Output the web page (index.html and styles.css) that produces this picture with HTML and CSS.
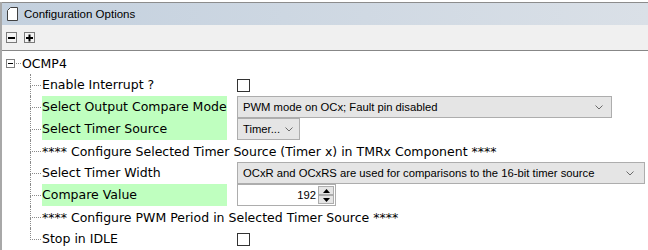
FILE: index.html
```html
<!DOCTYPE html>
<html lang="en">

<head>
    <meta charset="UTF-8">
    <title>Configuration Options</title>
    <link rel="stylesheet" href="styles.css">
</head>

<body>
    <div class="panel">
        <div class="title-bar">
            <svg class="page-icon" width="11" height="14" viewBox="0 0 11 14">
                <path d="M0.5 3.5 L3.5 0.5 H10.5 V13.5 H0.5 Z" fill="#fff" stroke="#404040" />
            </svg>
            <span>Configuration Options</span>
        </div>
        <div class="toolbar">
            <span class="tool-btn">
                <svg width="11" height="11" viewBox="0 0 11 11">
                    <rect x="0.5" y="0.5" width="10" height="10" fill="#f4f4f4" stroke="#7a7a7a" />
                    <rect x="2" y="5" width="7" height="2" fill="#000" />
                </svg>
            </span>
            <span class="tool-btn">
                <svg width="11" height="11" viewBox="0 0 11 11">
                    <rect x="0.5" y="0.5" width="10" height="10" fill="#f4f4f4" stroke="#7a7a7a" />
                    <rect x="2" y="5" width="7" height="2" fill="#000" />
                    <rect x="4.5" y="2.5" width="2" height="7" fill="#000" />
                </svg>
            </span>
        </div>

        <div class="tree">
            <div class="root-row">
                <svg class="expander" width="9" height="9" viewBox="0 0 9 9">
                    <rect x="0.5" y="0.5" width="8" height="8" fill="#fff" stroke="#7f7f7f" />
                    <rect x="2" y="4" width="5" height="1" fill="#000" />
                </svg>
                <span class="root-dots"></span>
                <span class="root-name">OCMP4</span>
            </div>
            <ul class="children">
                <li class="row">
                    <span class="link"><span class="link-top"></span><span class="link-bot"></span></span>
                    <span class="label">Enable Interrupt ?</span>
                    <span class="check"></span>
                </li>
                <li class="row">
                    <span class="link"><span class="link-top"></span><span class="link-bot"></span></span>
                    <span class="label changed">Select Output Compare Mode</span>
                    <div class="select select-mode">
                        <span>PWM mode on OCx; Fault pin disabled</span>
                        <svg width="8" height="5" viewBox="0 0 8 5"><polyline points="0.5,0.5 4,4 7.5,0.5" fill="none" stroke="#6a6a6a" /></svg>
                    </div>
                </li>
                <li class="row">
                    <span class="link"><span class="link-top"></span><span class="link-bot"></span></span>
                    <span class="label changed">Select Timer Source</span>
                    <div class="select select-timer">
                        <span>Timer...</span>
                        <svg width="8" height="5" viewBox="0 0 8 5"><polyline points="0.5,0.5 4,4 7.5,0.5" fill="none" stroke="#6a6a6a" /></svg>
                    </div>
                </li>
                <li class="row">
                    <span class="link"><span class="link-top"></span><span class="link-bot"></span></span>
                    <span class="comment">**** Configure Selected Timer Source (Timer x) in TMRx Component ****</span>
                </li>
                <li class="row">
                    <span class="link"><span class="link-top"></span><span class="link-bot"></span></span>
                    <span class="label">Select Timer Width</span>
                    <div class="select select-width">
                        <span>OCxR and OCxRS are used for comparisons to the 16-bit timer source</span>
                        <svg width="8" height="5" viewBox="0 0 8 5"><polyline points="0.5,0.5 4,4 7.5,0.5" fill="none" stroke="#6a6a6a" /></svg>
                    </div>
                </li>
                <li class="row">
                    <span class="link"><span class="link-top"></span><span class="link-bot"></span></span>
                    <span class="label changed">Compare Value</span>
                    <div class="spin">
                        <span class="spin-value">192</span>
                        <span class="spin-btns">
                            <span class="spin-btn">
                                <svg width="7" height="4" viewBox="0 0 7 4"><polygon points="3.5,0 7,4 0,4" fill="#000" /></svg>
                            </span>
                            <span class="spin-btn">
                                <svg width="7" height="4" viewBox="0 0 7 4"><polygon points="0,0 7,0 3.5,4" fill="#000" /></svg>
                            </span>
                        </span>
                    </div>
                </li>
                <li class="row">
                    <span class="link"><span class="link-top"></span><span class="link-bot"></span></span>
                    <span class="comment">**** Configure PWM Period in Selected Timer Source ****</span>
                </li>
                <li class="row last">
                    <span class="link"><span class="link-top"></span><span class="link-bot"></span></span>
                    <span class="label">Stop in IDLE</span>
                    <span class="check"></span>
                </li>
            </ul>
        </div>
    </div>
</body>

</html>
```

FILE: styles.css
```css
body {
    margin: 0;
    background-color: #ffffff;
    font-family: "DejaVu Sans", sans-serif;
    color: #000000;
}

.panel {
    margin-top: 2px;
    height: 248px;
    border-left: 2px solid #a8a8a8;
    overflow: hidden;
}

.title-bar {
    height: 22px;
    border-top: 1px solid #8c8c8c;
    background: linear-gradient(to right, #c3d0de, #dae0e7);
    display: flex;
    align-items: center;
    gap: 6px;
    padding-left: 5px;
    font-family: "Liberation Sans", sans-serif;
    font-size: 11.5px;
}

.page-icon {
    display: block;
}

.toolbar {
    height: 25px;
    background-color: #f0f0f0;
    border-bottom: 1px solid #878787;
    display: flex;
    align-items: center;
    gap: 7px;
    padding-left: 4px;
}

.tool-btn svg {
    display: block;
}

.tree {
    padding: 1px 0 0 4px;
    font-size: 12.5px;
}

.root-row {
    height: 22px;
    display: flex;
    align-items: center;
}

.expander {
    display: block;
}

.root-dots {
    width: 5px;
    margin: 0 1px;
    border-top: 1px dotted #8a8a8a;
}

.children {
    list-style: none;
    margin: 0 0 0 24px;
    padding: 0;
}

.row {
    height: 22px;
    display: flex;
    align-items: center;
}

.link {
    align-self: stretch;
    width: 11px;
    display: flex;
    flex-direction: column;
}

.link-top {
    height: 11px;
    border-left: 1px dotted #8a8a8a;
    border-bottom: 1px dotted #8a8a8a;
}

.link-bot {
    flex: 1;
    border-left: 1px dotted #8a8a8a;
}

.last .link-bot {
    border-left: none;
}

.label {
    width: 185px;
    height: 22px;
    line-height: 22px;
    margin-left: 1px;
    margin-right: 10px;
    white-space: nowrap;
}

.label.changed {
    background-color: #bfffbf;
}

.comment {
    margin-left: 1px;
    white-space: nowrap;
}

.check {
    width: 13px;
    height: 13px;
    box-sizing: border-box;
    border: 1px solid #333333;
    background-color: #ffffff;
}

.select {
    height: 22px;
    box-sizing: border-box;
    border: 1px solid #adadad;
    background-color: #e5e5e5;
    display: flex;
    align-items: center;
    justify-content: space-between;
    padding: 0 8px 0 5px;
    font-family: "Liberation Sans", sans-serif;
    font-size: 11.25px;
    white-space: nowrap;
}

.select svg {
    display: block;
}

.select-mode {
    width: 375px;
}

.select-timer {
    width: 63px;
    padding-right: 6px;
}

.select-width {
    width: 408px;
    padding-right: 10px;
}

.spin {
    width: 99px;
    height: 22px;
    box-sizing: border-box;
    border: 1px solid #adadad;
    background-color: #ffffff;
    display: flex;
    align-items: center;
    justify-content: flex-end;
    font-family: "Liberation Sans", sans-serif;
    font-size: 11.25px;
}

.spin-value {
    padding-right: 2px;
}

.spin-btns {
    display: flex;
    flex-direction: column;
    margin-right: 1px;
}

.spin-btn {
    width: 16px;
    height: 9px;
    box-sizing: border-box;
    border: 1px solid #adadad;
    background-color: #e5e5e5;
    display: flex;
    align-items: center;
    justify-content: center;
}

.spin-btn svg {
    display: block;
}
```
